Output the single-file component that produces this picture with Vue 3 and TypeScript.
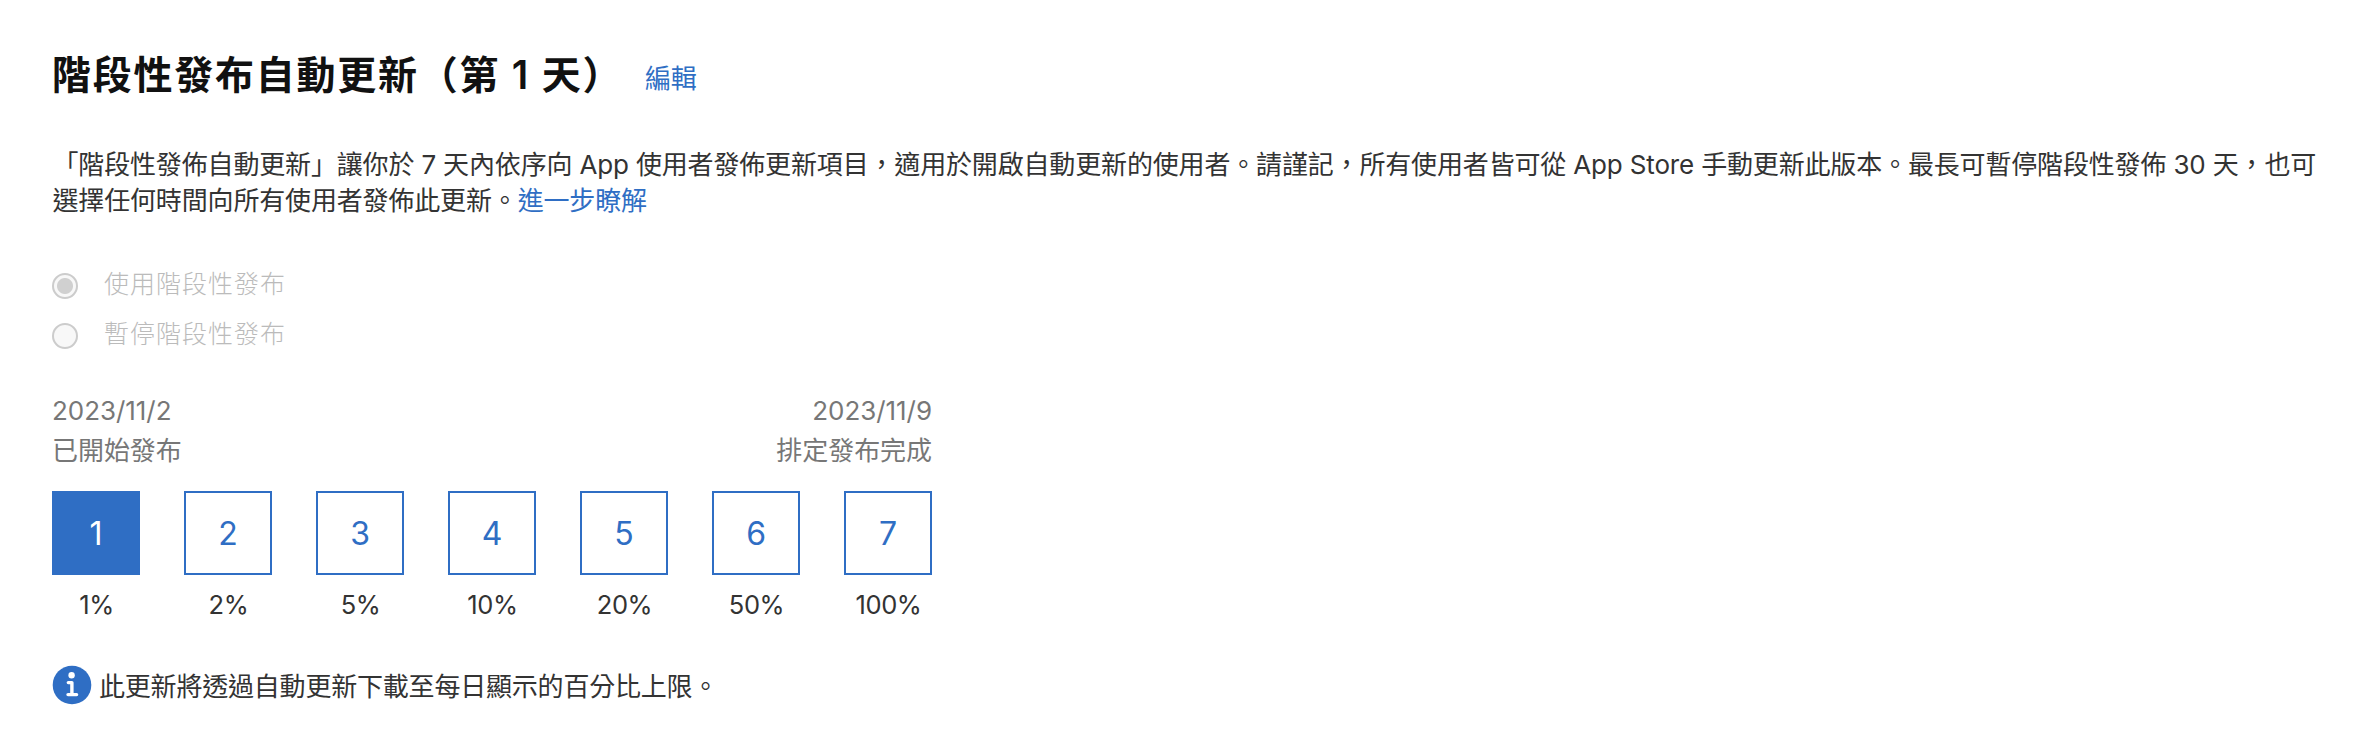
<script setup lang="ts">
interface Day {
  n: number
  pct: string
}
const days: Day[] = [
  { n: 1, pct: '1%' },
  { n: 2, pct: '2%' },
  { n: 3, pct: '5%' },
  { n: 4, pct: '10%' },
  { n: 5, pct: '20%' },
  { n: 6, pct: '50%' },
  { n: 7, pct: '100%' },
]
</script>

<template>
  <main class="page">
    <header class="head">
      <h1>階段性發布自動更新（第 1 天）</h1>
      <a class="link edit">編輯</a>
    </header>
    <p class="desc">
      <span class="line">「階段性發佈自動更新」讓你於 7 天內依序向 App 使用者發佈更新項目，適用於開啟自動更新的使用者。請謹記，所有使用者皆可從 App Store 手動更新此版本。最長可暫停階段性發佈 30 天，也可</span>
      <span class="line">選擇任何時間向所有使用者發佈此更新。<a class="link">進一步瞭解</a></span>
    </p>
    <div class="options">
      <div class="option"><span class="radio checked"></span><span class="label">使用階段性發布</span></div>
      <div class="option"><span class="radio"></span><span class="label">暫停階段性發布</span></div>
    </div>
    <section class="phase">
      <div class="dates">
        <div>2023/11/2<br />已開始發布</div>
        <div class="end">2023/11/9<br />排定發布完成</div>
      </div>
      <ol class="days">
        <li v-for="d in days" :key="d.n">
          <div class="box" :class="{ active: d.n === 1 }">{{ d.n }}</div>
          <div class="pct">{{ d.pct }}</div>
        </li>
      </ol>
    </section>
    <div class="note">
      <svg width="40" height="40" viewBox="0 0 40 40">
        <circle cx="20" cy="20" r="19.3" fill="#2f6ec4" />
        <circle cx="19.6" cy="10.2" r="3.2" fill="#fff" />
        <path d="M16.3 17.6h3.6v12M16 29.6h8.6" fill="none" stroke="#fff" stroke-width="3.4" stroke-linecap="round" stroke-linejoin="round" />
      </svg>
      <span class="note-text">此更新將透過自動更新下載至每日顯示的百分比上限。</span>
    </div>
  </main>
</template>

<style>
body {
  background: #fff;
}
</style>

<style scoped>
.page {
  box-sizing: border-box;
  width: 2368px;
  height: 734px;
  padding: 46px 52px 0;
  overflow: hidden;
  font-family: Inter, "Noto Sans CJK TC", sans-serif;
  font-size: 26px;
  letter-spacing: -0.16px;
  color: #333;
}
.head {
  display: flex;
  align-items: center;
  height: 56px;
}
h1 {
  flex: none;
  width: 593px;
  margin: -4px 0 0;
  font-size: 39px;
  font-weight: 600;
  letter-spacing: 1.75px;
  color: #111;
  white-space: nowrap;
}
.link {
  color: #2f6ec4;
}
.edit {
  margin-top: 4px;
}
.desc {
  margin: 45px 0 0;
  padding-left: 0.5px;
  line-height: 36px;
}
.line {
  display: block;
  white-space: nowrap;
}
.options {
  margin-top: 42px;
  color: #bbb;
  font-size: 25px;
  font-weight: 200;
  letter-spacing: 1px;
}
.option {
  display: flex;
  align-items: center;
  gap: 26px;
  height: 50px;
}
.label {
  padding-bottom: 9px;
}
.radio {
  box-sizing: border-box;
  width: 26px;
  height: 26px;
  border: 2px solid #ccc;
  border-radius: 50%;
  background: #f8f8f8;
}
.checked {
  background: radial-gradient(circle, #d0d0d0 7.5px, #f8f8f8 8.5px);
}
.phase {
  width: 880px;
}
.dates {
  display: flex;
  justify-content: space-between;
  margin-top: 30px;
  line-height: 40px;
  letter-spacing: -0.05px;
  color: #777;
}
.end {
  text-align: right;
}
.days {
  display: flex;
  justify-content: space-between;
  margin: 20px 0 0;
  padding: 0;
  list-style: none;
}
.box {
  box-sizing: border-box;
  width: 88px;
  height: 84px;
  border: 2px solid #2f6ec4;
  color: #2f6ec4;
  font-size: 32px;
  line-height: 81px;
  text-align: center;
}
.active {
  background: #2f6ec4;
  color: #fff;
}
.pct {
  margin-top: 12px;
  padding-left: 1px;
  font-size: 25.5px;
  line-height: 36px;
  letter-spacing: -0.4px;
  text-align: center;
}
.note {
  display: flex;
  align-items: center;
  gap: 7px;
  margin-top: 42px;
  letter-spacing: -0.2px;
}
.note-text {
  padding-bottom: 2px;
}
</style>
